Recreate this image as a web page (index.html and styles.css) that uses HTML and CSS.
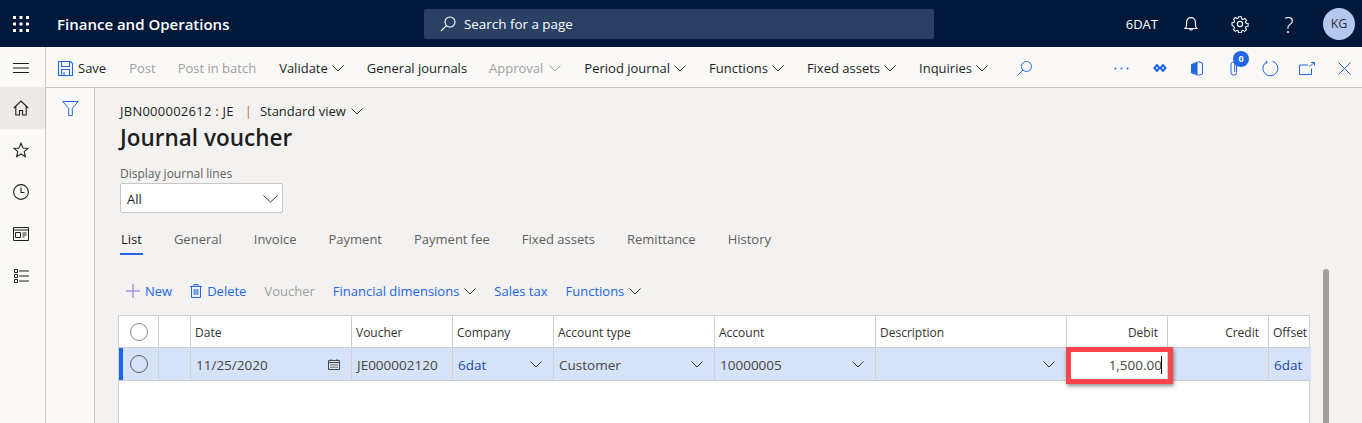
FILE: index.html
```html
<!DOCTYPE html>
<html lang="en">
<head>
<meta charset="UTF-8" />
<title>Journal voucher</title>
<link rel="stylesheet" href="styles.css">
</head>
<body>

  <!-- Top bar -->
  <header class="topbar">
    <svg class="waffle" width="16" height="16" viewBox="0 0 16 16" fill="#fff">
      <rect x="0" y="0" width="3" height="3"/><rect x="6.5" y="0" width="3" height="3"/><rect x="13" y="0" width="3" height="3"/>
      <rect x="0" y="6.5" width="3" height="3"/><rect x="6.5" y="6.5" width="3" height="3"/><rect x="13" y="6.5" width="3" height="3"/>
      <rect x="0" y="13" width="3" height="3"/><rect x="6.5" y="13" width="3" height="3"/><rect x="13" y="13" width="3" height="3"/>
    </svg>
    <div class="app-name">Finance and Operations</div>
    <div class="search-box">
      <svg width="16" height="16" viewBox="0 0 16 16" fill="none" stroke="#fff" stroke-width="1.1"><circle cx="10" cy="6" r="5"/><path d="M6.4 9.6 1 15"/></svg>
      <span>Search for a page</span>
    </div>
    <div class="top-right">
      <span class="company">6DAT</span>
      <svg class="t-bell" width="14" height="16" viewBox="0 0 14 16" fill="none" stroke="#fff" stroke-width="1.1"><path d="M1 12.5c1.2-1 1.6-2 1.6-4V6a4.4 4.4 0 0 1 8.8 0v2.500c0 2 .4 3 1.600 4z"/><path d="M5.500 13a1.600 1.600 0 0 0 3 0"/></svg>
      <svg class="t-gear" width="18" height="18" viewBox="0 0 18 18" fill="none" stroke="#fff" stroke-width="1.200"><circle cx="9" cy="9" r="2.600"/><path d="M7.500 1h3l.4 2.200 1.500.7 1.900-1.200 2 2.100-1.200 1.800.7 1.500 2.200.4v2.900l-2.200.4-.7 1.500 1.200 1.800-2 2.100-1.900-1.200-1.500.7-.4 2.200h-3l-.4-2.200-1.500-.7-1.900 1.200-2-2.100 1.200-1.800-.7-1.500L.1 10.400V7.500l2.200-.4.7-1.500-1.200-1.800 2-2.100 1.900 1.200 1.400-.7z" transform="translate(.9 .9) scale(.9)"/></svg>
      <span class="help">?</span>
      <span class="avatar">KG</span>
    </div>
  </header>

  <div class="shell">
    <!-- Left nav -->
    <nav class="sidenav">
      <div class="nav-item nav-menu"><svg width="16" height="12" viewBox="0 0 16 12" stroke="#201f1e" stroke-width="1"><path d="M0 1.500h16M0 6h16M0 10.500h16"/></svg></div>
      <div class="nav-item nav-active"><svg width="16" height="16" viewBox="0 0 16 16" fill="none" stroke="#201f1e" stroke-width="1.100"><path d="M.8 8 8 1l7.200 7M2.800 6.500V15h3.700v-4.500h3V15h3.700V6.500"/></svg></div>
      <div class="nav-item"><svg width="16" height="16" viewBox="0 0 16 16" fill="none" stroke="#201f1e" stroke-width="1.100"><path d="M8 1.200l2 4.800 5.100.4-3.900 3.300 1.200 5-4.400-2.700-4.400 2.700 1.200-5L.9 6.400 6 6z"/></svg></div>
      <div class="nav-item"><svg width="16" height="16" viewBox="0 0 16 16" fill="none" stroke="#201f1e" stroke-width="1.100"><circle cx="8" cy="8" r="7.400"/><path d="M8 3.500V8.500h3.500"/></svg></div>
      <div class="nav-item"><svg width="16" height="14" viewBox="0 0 16 14" fill="none" stroke="#201f1e" stroke-width="1"><path d="M.5.500h15v13H.5zM.5 3h15M2.500 5.500h5v5h-5zM9.500 6h4M9.500 8h4M9.500 10h2"/></svg></div>
      <div class="nav-item"><svg width="15" height="14" viewBox="0 0 15 14" fill="none" stroke="#201f1e" stroke-width="1"><path d="M.5.500h3v3h-3zM.5 5.500h3v3h-3zM.5 10.500h3v3h-3zM5 2h10M5 7h10M5 12h10"/></svg></div>
    </nav>

    <div class="content">
      <!-- Command bar -->
      <div class="cmdbar">
        <div class="cmd cmd-save">
          <svg width="15" height="15" viewBox="0 0 15 15" fill="none" stroke="#2266e3" stroke-width="1.100"><path d="M.5.500h12l2 2v12H.5zM3.500.500v5h8v-5M3.500 14.500v-6h8v6M6 11v3.500"/></svg>
          <span>Save</span>
        </div>
        <div class="cmd off">Post</div>
        <div class="cmd off cmd-batch">Post in batch</div>
        <div class="cmd">Validate <svg class="chev" width="12" height="7" viewBox="0 0 12 7"><path d="M.5.500 6 6l5.500-5.500"/></svg></div>
        <div class="cmd">General journals</div>
        <div class="cmd off cmd-approval">Approval <svg class="chev" width="12" height="7" viewBox="0 0 12 7"><path d="M.5.500 6 6l5.500-5.500"/></svg></div>
        <div class="cmd">Period journal <svg class="chev" width="12" height="7" viewBox="0 0 12 7"><path d="M.5.500 6 6l5.500-5.500"/></svg></div>
        <div class="cmd">Functions <svg class="chev" width="12" height="7" viewBox="0 0 12 7"><path d="M.5.500 6 6l5.500-5.500"/></svg></div>
        <div class="cmd">Fixed assets <svg class="chev" width="12" height="7" viewBox="0 0 12 7"><path d="M.5.500 6 6l5.500-5.500"/></svg></div>
        <div class="cmd">Inquiries <svg class="chev" width="12" height="7" viewBox="0 0 12 7"><path d="M.5.500 6 6l5.500-5.500"/></svg></div>
        <svg class="cmd-search" width="15" height="15" viewBox="0 0 15 15" fill="none" stroke="#2266e3" stroke-width="1"><circle cx="9.500" cy="5.500" r="5"/><path d="M6 9 .5 14.500"/></svg>
        <div class="cmd-tools">
          <svg class="i-dots" width="15" height="3" viewBox="0 0 15 3" fill="#2266e3"><circle cx="1.500" cy="1.500" r="1"/><circle cx="7.500" cy="1.500" r="1"/><circle cx="13.500" cy="1.500" r="1"/></svg>
          <svg class="i-diamond" width="14" height="8" viewBox="0 0 14 8" fill="none" stroke="#2266e3" stroke-width="2"><path d="M4 1 1.500 4 4 7l2.500-3zM10 1 7.500 4l2.500 3 2.500-3z"/></svg>
          <svg class="i-office" width="12" height="15" viewBox="0 0 12 15" fill="none" stroke="#2266e3" stroke-width="1"><path d="M.5 3.500 7.500.700l4 1.300v11l-4 1.300-7-2.300z"/><path d="M.5 3.500 6.500 1.500v12l-6-2z" fill="#2266e3" stroke="none"/></svg>
          <div class="attach">
            <svg width="8" height="15" viewBox="0 0 8 15" fill="none" stroke="#2266e3" stroke-width="1"><path d="M6.500 3v8.500a2.700 2.700 0 0 1-5.500 0V3a1.800 1.800 0 0 1 3.700 0v8"/></svg>
            <span class="badge">0</span>
          </div>
          <svg class="i-refresh" width="17" height="17" viewBox="0 0 17 17" fill="none" stroke="#2266e3" stroke-width="1"><path d="M5 1.700a7.500 7.500 0 1 0 5.500-.5"/><path d="M4 .8 5.500 2.200 3.800 3.800"/></svg>
          <svg class="i-popout" width="16" height="13" viewBox="0 0 16 13" fill="none" stroke="#2266e3" stroke-width="1"><path d="M9 3H.5v9.500h12V6.500M10.500 4.500 15.500.500M12 .5h3.500V4"/></svg>
          <svg class="i-close" width="13" height="13" viewBox="0 0 13 13" stroke="#2266e3" stroke-width="1"><path d="M.5.500l12 12M12.500.500l-12 12"/></svg>
        </div>
      </div>

      <div class="workspace">
        <!-- Filter pane -->
        <aside class="filterpane">
          <svg width="17" height="15" viewBox="0 0 17 15" fill="none" stroke="#2266e3" stroke-width="1"><path d="M.8.500h15.400L10.300 7.500v7H6.700v-7z"/></svg>
        </aside>

        <main class="page">
          <div class="crumb"><span class="crumb-id">JBN000002612 : JE</span> <span class="pipe">|</span> Standard view <svg class="chev" width="12" height="7" viewBox="0 0 12 7"><path d="M.5.500 6 6l5.500-5.500"/></svg></div>
          <h1>Journal voucher</h1>

          <label class="field-label">Display journal lines</label>
          <div class="select">
            <span>All</span>
            <svg width="15" height="8" viewBox="0 0 15 8" fill="none" stroke="#323130" stroke-width="1"><path d="M.5.500 7.500 7l7-6.500"/></svg>
          </div>

          <div class="tabs">
            <div class="tab tab-on">List</div>
            <div class="tab">General</div>
            <div class="tab">Invoice</div>
            <div class="tab">Payment</div>
            <div class="tab">Payment fee</div>
            <div class="tab">Fixed assets</div>
            <div class="tab">Remittance</div>
            <div class="tab">History</div>
          </div>

          <div class="actions">
            <div class="act">
              <svg width="14" height="14" viewBox="0 0 14 14" stroke="#8a6fd1" stroke-width="1"><path d="M0 7h14M7 0v14"/></svg>
              New
            </div>
            <div class="act">
              <svg width="12" height="14" viewBox="0 0 12 14" fill="none" stroke="#2266e3" stroke-width="1"><path d="M0 2.500h12M4 2.500V.500h4v2M1.500 2.500v11h9v-11M4.200 5v6M6 5v6M7.800 5v6"/></svg>
              Delete
            </div>
            <div class="act off">Voucher</div>
            <div class="act">Financial dimensions <svg class="chev" width="12" height="7" viewBox="0 0 12 7"><path d="M.5.500 6 6l5.500-5.500"/></svg></div>
            <div class="act">Sales tax</div>
            <div class="act">Functions <svg class="chev" width="12" height="7" viewBox="0 0 12 7"><path d="M.5.500 6 6l5.500-5.500"/></svg></div>
          </div>

          <!-- Grid -->
          <div class="grid">
            <div class="hd cell-check"><span class="radio"></span></div>
            <div class="hd"></div>
            <div class="hd">Date</div>
            <div class="hd">Voucher</div>
            <div class="hd">Company</div>
            <div class="hd">Account type</div>
            <div class="hd">Account</div>
            <div class="hd">Description</div>
            <div class="hd right">Debit</div>
            <div class="hd right">Credit</div>
            <div class="hd">Offset</div>

            <div class="td cell-check row-mark"><span class="radio dark"></span></div>
            <div class="td"></div>
            <div class="td spread">11/25/2020
              <svg width="12" height="11" viewBox="0 0 12 11" fill="none" stroke="#484644" stroke-width="1"><path d="M.5 1.500h11v9H.5zM.5 3.500h11M3 .2v1.500M9 .2v1.500"/><path d="M2.500 5.500h7M2.500 7h7M2.500 8.500h7" stroke-dasharray="1 1"/></svg>
            </div>
            <div class="td">JE000002120</div>
            <div class="td spread link">6dat <svg class="chev" width="12" height="7" viewBox="0 0 12 7"><path d="M.5.500 6 6l5.500-5.500"/></svg></div>
            <div class="td spread">Customer <svg class="chev" width="12" height="7" viewBox="0 0 12 7"><path d="M.5.500 6 6l5.500-5.500"/></svg></div>
            <div class="td spread">10000005 <svg class="chev" width="12" height="7" viewBox="0 0 12 7"><path d="M.5.500 6 6l5.500-5.500"/></svg></div>
            <div class="td spread"><span></span> <svg class="chev" width="12" height="7" viewBox="0 0 12 7"><path d="M.5.500 6 6l5.500-5.500"/></svg></div>
            <div class="td debit">
              <div class="debit-input">1,500.00<span class="caret"></span></div>
              <div class="redbox"></div>
            </div>
            <div class="td"></div>
            <div class="td link">6dat</div>
          </div>
          <div class="grid-empty"></div>
        </main>

        <div class="scrolltrack"><div class="scrollthumb"></div></div>
      </div>
    </div>
  </div>

</body>
</html>
```

FILE: styles.css
```css
:root {
  --navy: #00183a;
  --azul: #2266e3;
  --linha: #d2d0ce;
  --cinza: #a19f9d;
  --texto: #201f1e;
}

* {
  margin: 0;
  padding: 0;
  box-sizing: border-box;
}

html, body {
  height: 423px;
  overflow: hidden;
}

body {
  font-family: 'Open Sans', 'Noto Sans', sans-serif;
  font-size: 13px;
  color: var(--texto);
  background-color: #f3f2f1;
}

/* Top bar */
.topbar {
  height: 47px;
  background-color: var(--navy);
  color: white;
  display: flex;
  align-items: center;
  padding-left: 13px;
}

.app-name {
  margin-left: 28px;
  font-size: 15px;
  font-weight: 600;
  width: 367px;
  white-space: nowrap;
}

.search-box {
  width: 510px;
  height: 30px;
  background-color: #2a4165;
  border-radius: 2px;
  display: flex;
  align-items: center;
  gap: 8px;
  padding-left: 16px;
  font-size: 13.400px;
}

.top-right {
  margin-left: auto;
  display: flex;
  align-items: center;
  padding-right: 7px;
}

.company {
  font-size: 13px;
  margin-right: 26px;
}

.t-bell {
  margin-right: 33px;
}

.t-gear {
  margin-right: 33px;
}

.help {
  width: 14px;
  text-align: center;
  font-size: 22px;
  font-weight: 300;
  margin-right: 27px;
}

.avatar {
  width: 32px;
  height: 32px;
  border-radius: 50%;
  background-color: #b4c7ee;
  color: #323130;
  display: flex;
  align-items: center;
  justify-content: center;
  font-size: 12.500px;
}

/* Shell */
.shell {
  display: flex;
  height: 376px;
}

.sidenav {
  width: 46px;
  flex-shrink: 0;
  background-color: #faf9f8;
  border-right: 1px solid #c8c6c4;
}

.nav-item {
  height: 42px;
  display: flex;
  align-items: center;
  justify-content: center;
  padding-right: 3px;
}

.nav-menu {
  height: 40px;
  padding-top: 2px;
}

.nav-active {
  background-color: #edebe9;
}

.content {
  flex: 1;
  min-width: 0;
  display: flex;
  flex-direction: column;
}

/* Command bar */
.cmdbar {
  height: 41px;
  flex-shrink: 0;
  background-color: #faf9f8;
  border-bottom: 1px solid #c8c6c4;
  display: flex;
  align-items: center;
  padding: 2px 0 0 12px;
  gap: 23px;
}

.cmd {
  display: flex;
  align-items: center;
  gap: 4px;
  white-space: nowrap;
}

.cmd-save {
  gap: 5px;
}

.cmd-batch {
  margin-left: -1px;
}

.cmd-approval {
  margin-left: -1px;
  gap: 6px;
}

.off {
  color: var(--cinza);
}

.chev {
  fill: none;
  stroke: #323130;
  stroke-width: 1;
  flex-shrink: 0;
}

.off .chev {
  stroke: var(--cinza);
}

.cmd-search {
  margin-left: 6px;
}

.cmd-tools {
  margin-left: auto;
  display: flex;
  align-items: center;
  padding-right: 11px;
}

.i-dots {
  margin-right: 24px;
}

.i-diamond {
  margin-right: 24px;
}

.i-office {
  margin-right: 27px;
}

.attach {
  position: relative;
  margin-right: 24px;
  display: flex;
}

.badge {
  position: absolute;
  left: 3px;
  top: -10px;
  width: 16px;
  height: 16px;
  border-radius: 50%;
  background-color: var(--azul);
  color: white;
  font-size: 9px;
  font-weight: 700;
  display: flex;
  align-items: center;
  justify-content: center;
}

.i-refresh {
  margin-right: 20px;
}

.i-popout {
  margin-right: 23px;
}

/* Work area */
.workspace {
  flex: 1;
  min-height: 0;
  display: flex;
}

.filterpane {
  width: 49px;
  flex-shrink: 0;
  background-color: #faf9f8;
  border-right: 1px solid #c8c6c4;
  padding: 13px 0 0 16px;
}

.page {
  flex: 1;
  min-width: 0;
  padding: 14px 0 0 25px;
}

.crumb {
  display: flex;
  align-items: center;
  gap: 5px;
  height: 18px;
  white-space: nowrap;
}

.crumb-id {
  letter-spacing: 0.25px;
}

.pipe {
  color: #a9782f;
  margin: 0 3px 0 6px;
}

h1 {
  font-size: 22.500px;
  font-weight: 600;
  line-height: 32px;
  margin-top: 2px;
}

.field-label {
  display: block;
  font-size: 12px;
  color: #605e5c;
  margin-top: 12px;
  margin-bottom: 1px;
  line-height: 16px;
}

.select {
  width: 163px;
  height: 30px;
  background-color: white;
  border: 1px solid #c8c6c4;
  border-radius: 2px;
  display: flex;
  align-items: center;
  justify-content: space-between;
  padding: 2px 4px 0 6px;
}

.tabs {
  display: flex;
  gap: 32px;
  margin-top: 16px;
  padding-left: 1px;
  color: #605e5c;
}

.tab {
  height: 26px;
  padding-top: 1px;
  position: relative;
  white-space: nowrap;
}

.tab-on {
  color: var(--texto);
}

.tab-on::after {
  content: "";
  position: absolute;
  left: -1px;
  right: -1px;
  bottom: 0;
  height: 2px;
  background-color: var(--azul);
}

.actions {
  display: flex;
  align-items: center;
  gap: 18px;
  margin-top: 26px;
  height: 20px;
  padding-left: 6px;
  color: var(--azul);
}

.act {
  display: flex;
  align-items: center;
  gap: 5px;
  white-space: nowrap;
}

.act.off {
  color: var(--cinza);
}

/* Grid */
.grid {
  display: grid;
  grid-template-columns: 40px 32px 161px 101px 101px 161px 161px 191px 101px 101px 42px;
  grid-template-rows: 32px 33px;
  width: 1192px;
  margin-top: 14px;
  margin-left: -2px;
  border: 1px solid var(--linha);
  border-bottom: 0;
  background-color: white;
}

.hd, .td {
  border-right: 1px solid var(--linha);
  border-bottom: 1px solid var(--linha);
  display: flex;
  align-items: center;
  padding: 2px 4px 0;
  white-space: nowrap;
  overflow: hidden;
}

.hd {
  font-size: 12px;
  color: #323130;
}

.hd:nth-child(11), .td:last-child {
  border-right: 0;
}

.right {
  justify-content: flex-end;
  padding-right: 9px;
}

.td {
  background-color: #d6e2f8;
  color: #484644;
  font-size: 13.500px;
  padding: 1px 5px 0;
}

.spread {
  justify-content: space-between;
  padding-right: 11px;
}

.link {
  color: #1f4eaf;
}

.cell-check {
  justify-content: center;
  padding: 0;
}

.row-mark {
  box-shadow: inset 4px 0 0 var(--azul);
}

.radio {
  width: 18px;
  height: 18px;
  border-radius: 50%;
  border: 1px solid #8a8886;
}

.radio.dark {
  border-color: #605e5c;
}

.debit {
  background-color: white;
  overflow: visible;
  position: relative;
  justify-content: flex-end;
}

.debit-input {
  display: flex;
  align-items: center;
}

.caret {
  width: 1px;
  height: 18px;
  background-color: #000;
  margin-left: -1px;
}

/* red highlight over the debit cell */
.redbox {
  position: absolute;
  left: -1px;
  top: -1px;
  width: 107px;
  height: 37px;
  border: 5px solid #f8444a;
  box-shadow: 1px 2px 4px rgba(0,0,0,0.45);
}

.grid-empty {
  width: 1192px;
  margin-left: -2px;
  height: 42px;
  background-color: white;
  border: 1px solid var(--linha);
  border-top: 0;
  border-bottom: 0;
}

/* Scrollbar */
.scrolltrack {
  width: 39px;
  flex-shrink: 0;
  padding-top: 181px;
}

.scrollthumb {
  width: 6px;
  height: 154px;
  border-radius: 3px 3px 0 0;
  background-color: #a19f9d;
}
```
